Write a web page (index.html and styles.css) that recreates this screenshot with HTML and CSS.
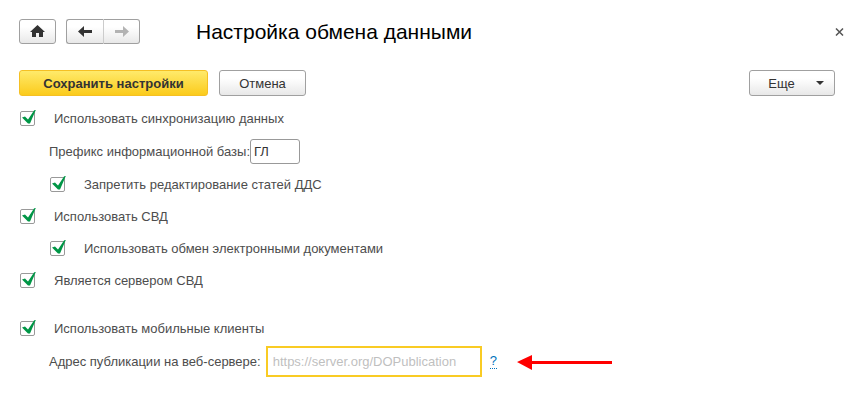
FILE: index.html
```html
<!DOCTYPE html>
<html lang="ru">
<head>
    <meta charset="UTF-8">
    <meta name="viewport" content="width=device-width, initial-scale=1.0">
    <title>Настройка обмена данными</title>
    <link rel="stylesheet" href="styles.css">
</head>
<body>
    <header class="header">
        <button type="button" class="btn nav-btn home" aria-label="Домой">
            <svg width="15" height="13" viewBox="0 0 15 13"><path d="M7.5 0 L15 7 L13 7 L13 12 L9 12 L9 8 L6 8 L6 12 L2 12 L2 7 L0 7 Z" fill="#333"/></svg>
        </button>
        <div class="nav-group">
            <button type="button" class="btn nav-btn back" aria-label="Назад">
                <svg width="14" height="11" viewBox="0 0 14 11"><path d="M0 5.5 L6 0 L6 4 L14 4 L14 7 L6 7 L6 11 Z" fill="#333"/></svg>
            </button>
            <button type="button" class="btn nav-btn forward" aria-label="Вперед" disabled>
                <svg width="14" height="11" viewBox="0 0 14 11"><path d="M14 5.5 L8 0 L8 4 L0 4 L0 7 L8 7 L8 11 Z" fill="#b3b3b3"/></svg>
            </button>
        </div>
        <h1>Настройка обмена данными</h1>
        <button type="button" class="close" aria-label="Закрыть">
            <svg width="9" height="8" viewBox="0 0 9 8"><path d="M1 0.5 L8 7.5 M8 0.5 L1 7.5" stroke="#555" stroke-width="1.5"/></svg>
        </button>
    </header>
    <form>
        <div class="toolbar">
            <button type="button" class="btn save">Сохранить настройки</button>
            <button type="button" class="btn cancel">Отмена</button>
            <button type="button" class="btn more">Еще
                <svg width="8" height="4" viewBox="0 0 8 4"><path d="M0 0 L8 0 L4 4 Z" fill="#333"/></svg>
            </button>
        </div>
        <div class="row">
            <input type="checkbox" id="sync" checked>
            <label for="sync">Использовать синхронизацию данных</label>
        </div>
        <div class="row field">
            <label for="prefix">Префикс информационной базы:</label>
            <input type="text" id="prefix" class="prefix" value="ГЛ">
        </div>
        <div class="row sub">
            <input type="checkbox" id="lock" checked>
            <label for="lock">Запретить редактирование статей ДДС</label>
        </div>
        <div class="row">
            <input type="checkbox" id="svd" checked>
            <label for="svd">Использовать СВД</label>
        </div>
        <div class="row sub">
            <input type="checkbox" id="docs" checked>
            <label for="docs">Использовать обмен электронными документами</label>
        </div>
        <div class="row">
            <input type="checkbox" id="server" checked>
            <label for="server">Является сервером СВД</label>
        </div>
        <div class="row mobile">
            <input type="checkbox" id="mobile" checked>
            <label for="mobile">Использовать мобильные клиенты</label>
        </div>
        <div class="row field">
            <label for="address">Адрес публикации на веб-сервере:</label>
            <input type="text" id="address" class="address" placeholder="https://server.org/DOPublication">
            <a href="#" class="help">?</a>
            <svg class="arrow" width="95" height="17" viewBox="0 0 95 17"><path d="M0 9 L15 2 L15 8 L95 8 L95 11 L15 11 L15 17 Z" fill="#f00"/></svg>
        </div>
    </form>
</body>
</html>
```
FILE: styles.css
```css
body {
    margin: 0;
    padding: 19px 26px 19px 19px;
    background-color: #fff;
    color: #4d4d4d;
    font-family: Arial, "Liberation Sans", sans-serif;
    font-size: 13px;
}
input, button {
    box-sizing: border-box;
    margin: 0;
    font-family: inherit;
    font-size: 13px;
}
.header, .toolbar, .row, .nav-group {
    display: flex;
    align-items: center;
}
.header {
    margin-bottom: 26px;
}
h1 {
    margin: 0 0 0 56px;
    color: #000;
    font-size: 21px;
    line-height: 25px;
    font-weight: normal;
}
.btn {
    display: flex;
    align-items: center;
    justify-content: center;
    height: 26px;
    padding: 0;
    border: 1px solid #a0a0a0;
    border-radius: 3px;
    background: linear-gradient(#fff 30%, #e8e8e8);
    color: #333;
}
.nav-btn {
    width: 37px;
    height: 25px;
}
.home {
    margin-right: 10px;
}
.back {
    width: 38px;
    border-right-color: #ccc;
    border-radius: 3px 0 0 3px;
}
.forward {
    width: 36px;
    border-left: none;
    border-radius: 0 3px 3px 0;
}
.close {
    display: flex;
    margin-left: auto;
    margin-right: -9px;
    padding: 0;
    border: none;
    background: none;
}
.toolbar {
    gap: 11px;
    margin-bottom: 6px;
}
.save {
    width: 189px;
    border-color: #f5c024;
    background: linear-gradient(#ffea6b, #fbcb1c);
    font-weight: bold;
}
.cancel {
    width: 87px;
}
.more {
    gap: 21px;
    width: 86px;
    margin-left: auto;
    padding-left: 8px;
}
.row {
    height: 32px;
}
.sub {
    padding-left: 30px;
}
.field {
    height: 34px;
    padding-left: 30px;
}
.mobile {
    margin-top: 16px;
}
input[type="checkbox"] {
    appearance: none;
    position: relative;
    width: 15px;
    height: 15px;
    margin: 0 19px 0 1px;
    border: 1px solid #999;
    border-radius: 2px;
}
input[type="checkbox"]:checked::before {
    content: "";
    position: absolute;
    left: 1px;
    top: -2px;
    width: 14px;
    height: 14px;
    background-color: #009646;
    clip-path: polygon(0 8px, 3px 7px, 6px 10px, 12px 1px, 14px 0, 8px 14px, 6px 14px);
}
input[type="text"] {
    border: 1px solid #999;
    border-radius: 3px;
    background-color: #fff;
    color: #333;
}
.prefix {
    width: 50px;
    height: 25px;
    padding: 0 3px;
}
input.address {
    width: 216px;
    height: 31px;
    margin-left: 5px;
    padding: 0 5px;
    border: 2px solid #f9cb24;
    border-radius: 0;
}
.address::placeholder {
    color: #bfbfbf;
}
.help {
    margin-left: 8px;
    border-bottom: 1px dotted #0072bc;
    color: #0072bc;
    text-decoration: none;
}
.arrow {
    margin-left: 20px;
}
```
